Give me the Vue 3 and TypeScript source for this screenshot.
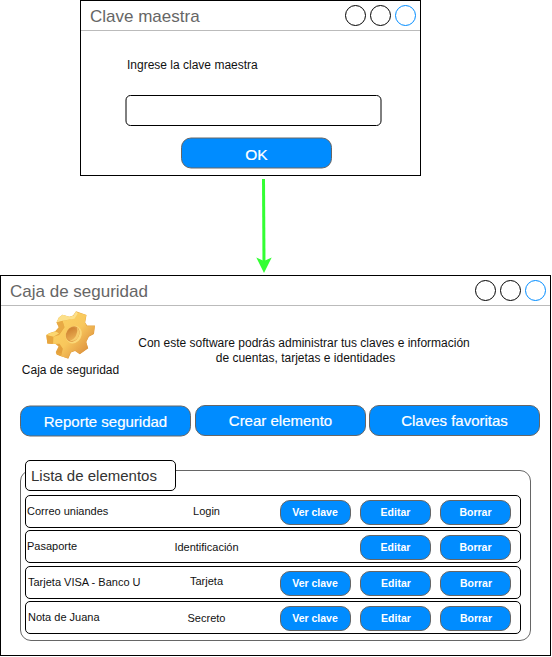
<script setup lang="ts">
interface Item {
  id: string
  name: string
  kind: string
  viewable: boolean
}

const actions: { id: string; label: string }[] = [
  { id: 'report', label: 'Reporte seguridad' },
  { id: 'create', label: 'Crear elemento' },
  { id: 'favorites', label: 'Claves favoritas' },
]

const items: Item[] = [
  { id: 'correo', name: 'Correo uniandes', kind: 'Login', viewable: true },
  { id: 'pasaporte', name: 'Pasaporte', kind: 'Identificación', viewable: false },
  { id: 'tarjeta', name: 'Tarjeta VISA - Banco U', kind: 'Tarjeta', viewable: true },
  { id: 'nota', name: 'Nota de Juana', kind: 'Secreto', viewable: true },
]
</script>

<template>
  <main class="board">
    <section class="window login">
      <header class="titlebar">
        <h1>Clave maestra</h1>
        <div class="controls"><i></i><i></i><i class="accent"></i></div>
      </header>
      <div class="login-body">
        <label for="master">Ingrese la clave maestra</label>
        <input id="master" class="field" type="password" />
        <button class="btn ok">OK</button>
      </div>
    </section>

    <svg class="arrow" width="40" height="99" viewBox="244 176 40 99">
      <path d="M263.5 179L264 264" fill="none" stroke="#33ff33" stroke-width="3" />
      <path d="M264 273L256.300 257.500L264 261L271.700 257.500Z" fill="#33ff33" />
    </svg>

    <section class="window vault">
      <header class="titlebar">
        <h1>Caja de seguridad</h1>
        <div class="controls"><i></i><i></i><i class="accent"></i></div>
      </header>

      <div class="intro">
        <figure class="brand">
          <svg width="50" height="50" viewBox="17 17 148 148">
            <defs>
              <linearGradient id="face" x1="0" y1="0" x2="1" y2="1">
                <stop offset="0" stop-color="#fcd465" />
                <stop offset=".5" stop-color="#f8c75c" />
                <stop offset=".75" stop-color="#e5a046" />
                <stop offset="1" stop-color="#c4762f" />
              </linearGradient>
              <linearGradient id="side" x1="0" y1="0" x2="1" y2="1">
                <stop offset="0" stop-color="#f0b548" />
                <stop offset="1" stop-color="#d98e33" />
              </linearGradient>
              <linearGradient id="hole" x1="0" y1="0" x2="1" y2="1">
                <stop offset="0" stop-color="#c8782a" />
                <stop offset="1" stop-color="#efb557" />
              </linearGradient>
            </defs>
            <path d="M48 54L55 39L66 31L86 37L97 33L106 21L137 32L133 54L139 63L162 63L159 88L144 96L136 112L142 130L117 148L103 138L91 143L83 161L49 149L46 141L54 125L45 118L21 116L18 91L26 86L44 80L55 68Z" fill="url(#side)" />
            <path d="M66 49L86 46L98 42L106 23L136 32L132 54L138 65L161 64L158 87L143 95L136 112L141 130L117 147L103 137L90 142L82 160L61 154L67 132L57 117L38 118L39 96L56 91L72 68Z" fill="url(#face)" />
            <path d="M48 54L55 39L66 31L86 37L98 34L106 21L111 27L101 43L83 46L66 49Z" fill="#fce08a" />
            <path d="M18 91L29 85L46 81L56 86L39 96Z" fill="#fbd670" />
            <path d="M48 54L66 50L71 68L58 86L46 80L55 68Z" fill="#e8aa45" />
            <path d="M18 92L38 97L37 118L21 116ZM46 141L64 145L61 154L49 149Z" fill="#e7a63f" />
            <ellipse cx="99" cy="90" rx="23" ry="27" transform="rotate(30 99 90)" fill="#fbd878" />
            <ellipse cx="96" cy="88" rx="19" ry="24" transform="rotate(30 96 88)" fill="#dc9540" />
            <ellipse cx="93" cy="87" rx="14" ry="20" transform="rotate(30 93 87)" fill="url(#hole)" />
            <path d="M109 68Q120 80 113 96Q104 112 87 108Q101 103 106 92Q112 80 109 68Z" fill="#f7cc6c" />
          </svg>
          <figcaption>Caja de seguridad</figcaption>
        </figure>
        <p class="lead">Con este software podrás administrar tus claves e información<br /><span>de cuentas, tarjetas e identidades</span></p>
      </div>

      <nav class="actions">
        <button v-for="action in actions" :key="action.id" class="btn" :class="action.id">{{ action.label }}</button>
      </nav>

      <section class="list">
        <h2>Lista de elementos</h2>
        <ul>
          <li v-for="item in items" :key="item.id" :class="item.id">
            <span class="name">{{ item.name }}</span>
            <span class="kind">{{ item.kind }}</span>
            <button v-if="item.viewable" class="btn small view">Ver clave</button>
            <button class="btn small edit">Editar</button>
            <button class="btn small remove">Borrar</button>
          </li>
        </ul>
      </section>
    </section>
  </main>
</template>

<style>
body {
  background: #fff;
}
</style>

<style scoped>
* {
  box-sizing: border-box;
  margin: 0;
  padding: 0;
}
.board {
  width: 552px;
  height: 657px;
  display: flex;
  flex-direction: column;
  align-items: flex-start;
  font-family: "Liberation Sans", Arial, sans-serif;
  font-size: 12px;
  color: #111;
}
.window {
  border: 1px solid #000;
  background: #fff;
}
.login {
  width: 341px;
  height: 176px;
  margin-left: 80px;
}
.vault {
  width: 551px;
  height: 381px;
}
.titlebar {
  height: 30px;
  border-bottom: 1px solid #bbb;
  padding: 0 4px 0 9px;
  display: flex;
  justify-content: space-between;
}
h1 {
  font-size: 17px;
  font-weight: 400;
  line-height: 31px;
  color: #666;
}
.controls {
  display: flex;
  gap: 4px;
  padding-top: 4px;
}
.controls i {
  width: 21px;
  height: 21px;
  border: 1px solid #000;
  border-radius: 50%;
}
.controls .accent {
  border-color: #008cff;
}
.login-body {
  display: flex;
  flex-direction: column;
  padding: 27px 0 0 44px;
}
.login-body label {
  line-height: 14px;
  padding-left: 2px;
}
.field {
  width: 256px;
  height: 31px;
  margin-top: 23px;
  border: 1px solid #000;
  border-radius: 5px;
  background: #fff;
  transform: translateX(0.5px);
}
.btn {
  font-family: inherit;
  font-size: 15px;
  line-height: 29px;
  color: #fff;
  background: #008cff;
  border: 1px solid #666;
  border-radius: 10px;
  width: 171px;
  height: 31px;
  white-space: nowrap;
  -webkit-text-stroke: 0.2px #fff;
}
.ok {
  width: 151px;
  margin: 11px 0 0 56px;
  font-size: 15.5px;
  padding-top: 1px;
  transform: translateY(0.5px);
}
.arrow {
  display: block;
  margin-left: 244px;
}
.intro {
  display: flex;
  height: 99px;
  padding-left: 19px;
}
.brand {
  width: 101px;
  padding-top: 4px;
  display: flex;
  flex-direction: column;
  align-items: center;
}
.brand svg {
  display: block;
}
figcaption {
  line-height: 14px;
  margin-top: 3px;
}
.lead {
  width: 366px;
  text-align: center;
  line-height: 15px;
  padding-top: 29.5px;
}
.lead span {
  padding-left: 3px;
}
.actions {
  display: flex;
  padding-left: 19px;
}
.report {
  transform: translateY(0.5px);
}
.create {
  margin-left: 4px;
}
.favorites {
  margin-left: 3px;
}
.list {
  width: 511px;
  height: 171px;
  margin: 34px 0 0 19px;
  border: 1px solid #666;
  border-radius: 11px;
  padding-left: 4px;
}
h2 {
  width: 151px;
  height: 31px;
  margin-top: -11px;
  border: 1px solid #000;
  border-radius: 5px;
  background: #fff;
  padding-left: 5px;
  font-size: 15px;
  font-weight: 400;
  line-height: 30px;
  color: #333;
}
ul {
  list-style: none;
  display: flex;
  flex-direction: column;
  gap: 2px;
  padding-top: 4px;
}
li {
  width: 496px;
  height: 33px;
  border: 1px solid #000;
  border-radius: 5px;
  display: grid;
  grid-template-columns: 131px 99px 24px 71px 9px 71px 9px 71px;
  align-items: start;
}
.tarjeta {
  margin-top: 1px;
}
.name,
.kind {
  font-size: 11px;
  line-height: 14px;
  padding-top: 8px;
  white-space: nowrap;
}
.name {
  padding-left: 1px;
}
.kind {
  text-align: center;
}
.pasaporte .kind,
.nota .kind {
  padding-top: 9px;
}
.tarjeta .kind {
  padding-top: 7px;
}
.tarjeta .name,
.nota .name {
  padding-left: 2px;
}
.small {
  width: 71px;
  height: 25px;
  margin-top: 4px;
  font-size: 10.5px;
  font-weight: 700;
  line-height: 23px;
  -webkit-text-stroke: 0;
}
.tarjeta .edit,
.tarjeta .remove,
.nota .edit,
.nota .remove {
  padding-left: 1px;
}
.view {
  grid-column: 4;
  padding-right: 1px;
}
.edit {
  grid-column: 6;
}
.remove {
  grid-column: 8;
}
</style>
